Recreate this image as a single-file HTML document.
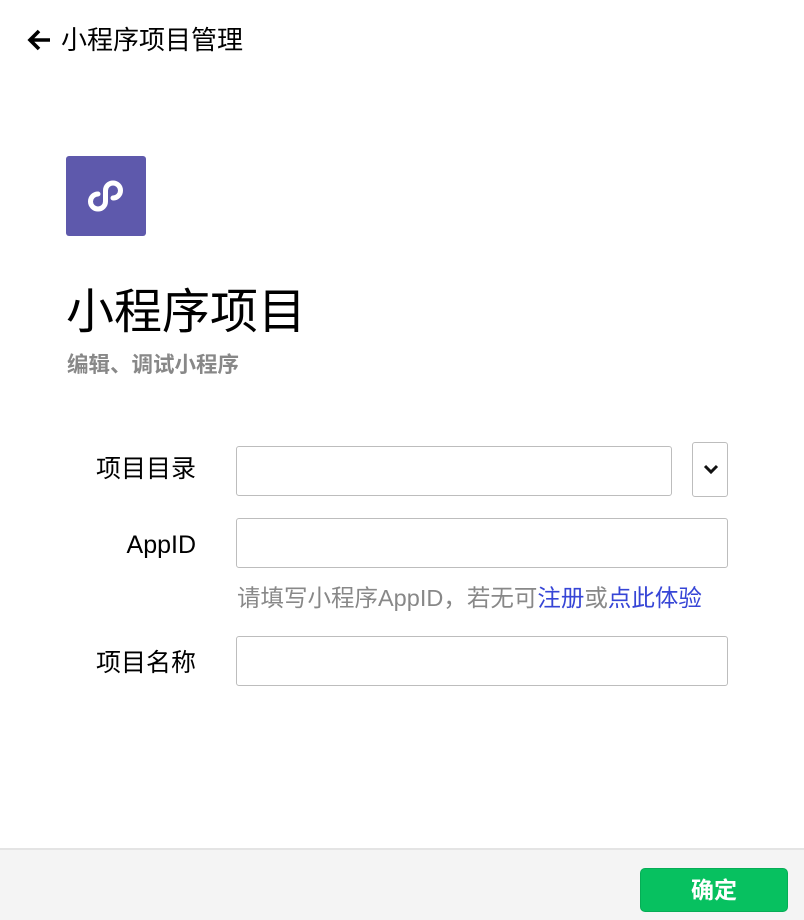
<!DOCTYPE html>
<html><head><meta charset="utf-8"><style>
*{margin:0;padding:0;box-sizing:border-box}
body{width:804px;height:920px;background:#fff;position:relative;overflow:hidden;font-family:"Liberation Sans","Noto Sans CJK SC",sans-serif;color:#000}
.abs{position:absolute}
.inp{position:absolute;border:1px solid #bdbdbd;border-radius:3px;background:#fff}
.lbl{position:absolute;right:608px;font-size:25px;line-height:30px;white-space:nowrap}
</style></head><body>
<svg class="abs" style="left:26px;top:28px" width="26" height="24" viewBox="0 0 26 24"><path d="M24 12H5M13 3L4 12l9 9" stroke="#000" stroke-width="3.6" fill="none"/></svg>
<div class="abs" style="left:61px;top:23px;font-size:26px;line-height:34px">小程序项目管理</div>
<div class="abs" style="left:66px;top:156px;width:80px;height:80px;background:#5e59ac;border-radius:3px">
<svg width="80" height="80" viewBox="0 0 80 80"><path d="M32 38a7.5 7.5 0 1 0 7.5 7.5V34.5a7.5 7.5 0 1 1 7.5 7.5" stroke="#fff" stroke-width="5" fill="none" stroke-linecap="round"/></svg></div>
<div class="abs" style="left:66px;top:285px;font-size:48px;line-height:56px">小程序项目</div>
<div class="abs" style="left:67px;top:351px;font-size:21.5px;line-height:28px;color:#888;font-weight:bold">编辑、调试小程序</div>
<div class="lbl" style="top:454px">项目目录</div>
<div class="inp" style="left:236px;top:446px;width:436px;height:50px"></div>
<div class="inp" style="left:692px;top:442px;width:36px;height:55px"><svg class="abs" style="left:10px;top:20px" width="16" height="12" viewBox="0 0 16 12"><path d="M2 3l6 6 6-6" stroke="#111" stroke-width="3" fill="none"/></svg></div>
<div class="lbl" style="top:530px">AppID</div>
<div class="inp" style="left:236px;top:518px;width:492px;height:50px"></div>
<div class="abs" style="left:237px;top:583px;font-size:23.5px;line-height:30px;color:#888;white-space:nowrap">请填写小程序AppID，若无可<span style="color:#3645d6">注册</span>或<span style="color:#3645d6">点此体验</span></div>
<div class="lbl" style="top:648px">项目名称</div>
<div class="inp" style="left:236px;top:636px;width:492px;height:50px"></div>
<div class="abs" style="left:0;top:848px;width:804px;height:72px;background:#f4f4f4;border-top:2px solid #e4e4e4"></div>
<div class="abs" style="left:640px;top:868px;width:148px;height:44px;background:#07c160;border:1px solid #06ad56;border-radius:5px;color:#fff;font-size:23px;font-weight:bold;line-height:42px;text-align:center">确定</div>
</body></html>
